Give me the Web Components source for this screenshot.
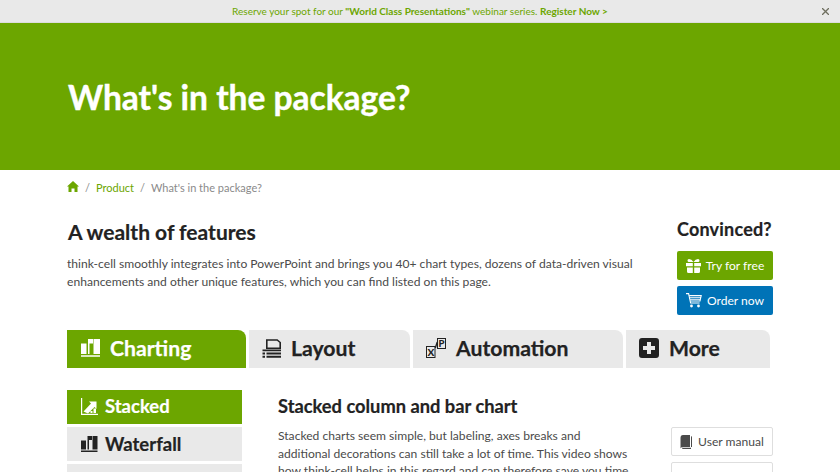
<!DOCTYPE html>
<html lang="en">
<head>
<meta charset="utf-8">
<title>What's in the package?</title>
<style>
  html, body { margin: 0; height: 472px; overflow: hidden; background: #fff; }
  body { font-family: Lato, "Open Sans", sans-serif; color: #222; }
</style>
</head>
<body>
<promo-banner></promo-banner>
<page-hero>What's in the package?</page-hero>
<page-body></page-body>

<script>
const ICONS = {
  charting: '<svg width="19" height="18" viewBox="0 0 19 18"><path fill="currentColor" d="M0 4.500h5.500V15H0zM7 0h5v4.500H8.500V15H7zM12.500 0H19v15h-6.500zM0 16.200h19v1.500H0z" /></svg>',
  layout: '<svg width="19" height="19" viewBox="0 0 19 19"><path fill="none" stroke="currentColor" stroke-width="1.600" d="M4.800 9.200V1h10.400l3 2.500v5.700H4.800z" /><path fill="currentColor" d="M.5 10.500h18.500v1.800H.5zM.5 13.500h2.500v2H.5zM4.500 13.500H19v2H4.500zM.5 16.700h2.500v2H.5zM4.500 16.700H19v2H4.500z" /></svg>',
  automation: '<svg width="20" height="20" viewBox="0 0 20 20"><rect x=".5" y="8.500" width="8.500" height="11" fill="none" stroke="currentColor" /><rect x="11.500" y=".5" width="8" height="10" fill="none" stroke="currentColor" /><path stroke="currentColor" stroke-width="1.400" d="M9.300 10l2-6" /><text x="4.800" y="17.500" text-anchor="middle" font-size="10" font-weight="900" fill="currentColor">X</text><text x="15.500" y="9" text-anchor="middle" font-size="9.500" font-weight="900" fill="currentColor">P</text></svg>',
  more: '<svg width="20" height="20" viewBox="0 0 20 20"><path fill="currentColor" fill-rule="evenodd" d="M3 0h14q3 0 3 3v14q0 3-3 3H3q-3 0-3-3V3q0-3 3-3zM8 4v4H4v4h4v4h4v-4h4V8h-4V4z" /></svg>',
  stacked: '<svg width="17" height="17" viewBox="0 0 17 17"><path fill="none" stroke="currentColor" stroke-width="1.200" d="M.6 0v16.400H17" /><path fill="currentColor" d="M2.500 13.500l7.500-8-2-2h7.500v7.500l-2-2-6.500 6.500zM9.500 15v-2h2v2zM12.500 15v-4.500h2.500V15z" /></svg>',
  waterfall: '<svg width="17" height="16" viewBox="0 0 17 16"><path fill="currentColor" d="M0 4.500h5v9H0zM6.500 0H11v4H8v9.500H6.500zM11.500 0H16.500v13.500h-5zM0 14.500h16.500V16H0z" /></svg>',
  home: '<svg width="12" height="11" viewBox="0 0 12 11"><path fill="#6ca600" d="M6 0l6 5.500h-1.500V11H7.500V7.500h-3V11H1.500V5.500H0z" /></svg>',
  gift: '<svg width="15" height="14" viewBox="0 0 15 14"><path fill="currentColor" d="M1 8.500h5.800V14H2.500Q1 14 1 12.500zM8.200 8.500H14v4q0 1.500-1.500 1.500H8.200zM0 4h6.800v3.300H0zM8.200 4H15v3.300H8.200zM3 0q2.500 0 4.500 3Q9.500 0 12 0q1.500 0 1.500 1.500T12 3H3Q1.500 3 1.500 1.500T3 0z" /></svg>',
  cart: '<svg width="16" height="15" viewBox="0 0 16 15"><path fill="none" stroke="currentColor" stroke-width="1.100" d="M0 .6h2.600l2 9.400h9" /><path fill="none" stroke="currentColor" stroke-width="1.100" d="M3.200 2.500h12l-1.200 5.500H4.300M3.800 4.300h11M4.100 6.200h10.300" /><circle cx="5.500" cy="13" r="1.400" fill="currentColor" /><circle cx="12.500" cy="13" r="1.400" fill="currentColor" /></svg>',
  book: '<svg width="13" height="14" viewBox="0 0 13 14"><path fill="currentColor" d="M3 0h7v12H3Q.5 12 .5 13.500V3Q.5 0 3 0zM11 1q1 .2 1 1.500V12h-1zM2 12.800h9V14H3q-1 0-1-1.200z" /></svg>'
};

class PromoBanner extends HTMLElement {
  constructor() {
    super();
    this.attachShadow({ mode: 'open' }).innerHTML = `
      <style>
        :host {
          display: flex;
          justify-content: center;
          align-items: center;
          position: relative;
          height: 21px;
          padding-bottom: 1px;
          background: #e9e9e9;
          border-bottom: 1px solid #dcdcdc;
          color: #6ca600;
          font-size: 10px;
        }
        a { color: inherit; text-decoration: none; }
        svg { position: absolute; right: 11px; top: 8px; }
      </style>
      <span>Reserve your spot for our <b>"World Class Presentations"</b> webinar series. <a href="#"><b>Register Now &gt;</b></a></span>
      <svg width="7" height="7" viewBox="0 0 7 7"><path stroke="#6f6f5f" stroke-width="1.300" d="M0 0l7 7M7 0L0 7" /></svg>`;
  }
}

class PageHero extends HTMLElement {
  constructor() {
    super();
    this.attachShadow({ mode: 'open' }).innerHTML = `
      <style>
        :host {
          display: flex;
          align-items: center;
          box-sizing: border-box;
          height: 147px;
          padding: 0 68px;
          background: #6ca600;
          color: #fff;
          font-size: 33.500px;
          font-weight: 700;
          -webkit-text-stroke: .4px #fff;
        }
      </style>
      <slot></slot>`;
  }
}

class BreadCrumb extends HTMLElement {
  constructor() {
    super();
    this.attachShadow({ mode: 'open' }).innerHTML = `
      <style>
        :host {
          display: flex;
          align-items: center;
          gap: 6px;
          height: 34px;
          padding-bottom: 1px;
          font-size: 11px;
          color: #8a8a8a;
        }
        a { color: #6ca600; text-decoration: none; }
        svg { display: block; margin-top: -1px; }
      </style>
      <a href="#">${ICONS.home}</a><span>/</span><a href="#">Product</a><span>/</span><span>What's in the package?</span>`;
  }
}

class ActionButton extends HTMLElement {
  constructor() {
    super();
    const icon = ICONS[this.getAttribute('icon')] || '';
    this.attachShadow({ mode: 'open' }).innerHTML = `
      <style>
        :host {
          display: flex;
          align-items: center;
          justify-content: center;
          gap: 5px;
          box-sizing: border-box;
          height: 29px;
          border-radius: 2px;
          background: #6ca600;
          color: #fff;
          font-size: 12.100px;
        }
        :host([kind="blue"]) { background: #0073b7; }
        :host([kind="plain"]) {
          background: #fff;
          color: #4a4a4a;
          border: 1px solid #dedede;
        }
        svg { display: block; }
      </style>
      ${icon}<slot></slot>`;
  }
}

class IntroBlock extends HTMLElement {
  constructor() {
    super();
    this.attachShadow({ mode: 'open' }).innerHTML = `
      <style>
        :host {
          display: flex;
          justify-content: space-between;
          height: 125px;
        }
        h2 {
          margin: 14px 0 0;
          padding-left: 1px;
          font-size: 21px;
          line-height: 26px;
          font-weight: 700;
          -webkit-text-stroke: .2px #222;
          color: #222;
        }
        p {
          margin: 10px 0 0;
          width: 590px;
          font-size: 12.100px;
          line-height: 18px;
          color: #4a4a4a;
        }
        aside {
          display: flex;
          flex-direction: column;
          width: 96px;
          gap: 6px;
        }
        h3 {
          margin: 12px 0 4px;
          font-size: 18px;
          line-height: 24px;
          font-weight: 700;
          letter-spacing: .2px;
          -webkit-text-stroke: .2px #222;
          white-space: nowrap;
          color: #222;
        }
      </style>
      <div>
        <h2>A wealth of features</h2>
        <p>think-cell smoothly integrates into PowerPoint and brings you 40+ chart types, dozens of data-driven visual enhancements and other unique features, which you can find listed on this page.</p>
      </div>
      <aside>
        <h3>Convinced?</h3>
        <action-button icon="gift">Try for free</action-button>
        <action-button icon="cart" kind="blue">Order now</action-button>
      </aside>`;
  }
}

class TabItem extends HTMLElement {
  constructor() {
    super();
    const icon = ICONS[this.getAttribute('icon')] || '';
    this.attachShadow({ mode: 'open' }).innerHTML = `
      <style>
        :host {
          display: flex;
          align-items: center;
          gap: 10px;
          box-sizing: border-box;
          height: 38px;
          padding: 0 0 2px 13px;
          border-radius: 0 8px 0 0;
          background: #e9e9e9;
          color: #222;
          font-size: 21.200px;
          font-weight: 700;
          -webkit-text-stroke: .25px currentColor;
        }
        :host([active]) { background: #6ca600; color: #fff; padding-left: 14px; }
        svg { display: block; -webkit-text-stroke: 0; }
      </style>
      ${icon}<slot></slot>`;
  }
}

class TabBar extends HTMLElement {
  constructor() {
    super();
    this.attachShadow({ mode: 'open' }).innerHTML = `
      <style>
        :host {
          display: grid;
          grid-template-columns: 179px 161px 210px 144px;
          gap: 3px;
          height: 38px;
        }
      </style>
      <slot></slot>`;
  }
}

class SideItem extends HTMLElement {
  constructor() {
    super();
    const icon = ICONS[this.getAttribute('icon')] || '';
    this.attachShadow({ mode: 'open' }).innerHTML = `
      <style>
        :host {
          display: flex;
          align-items: center;
          gap: 7px;
          box-sizing: border-box;
          height: 34px;
          padding: 0 0 1px 14px;
          background: #e9e9e9;
          color: #222;
          font-size: 18.500px;
          font-weight: 700;
          -webkit-text-stroke: .2px currentColor;
        }
        :host([active]) { background: #6ca600; color: #fff; padding-bottom: 2px; }
        svg { display: block; }
      </style>
      ${icon}<slot></slot>`;
  }
}

class SideNav extends HTMLElement {
  constructor() {
    super();
    this.attachShadow({ mode: 'open' }).innerHTML = `
      <style>
        :host {
          display: flex;
          flex-direction: column;
          gap: 3px;
          width: 175px;
          flex: none;
        }
      </style>
      <slot></slot>`;
  }
}

class FeatureDetail extends HTMLElement {
  constructor() {
    super();
    this.attachShadow({ mode: 'open' }).innerHTML = `
      <style>
        :host { display: block; flex: 1; min-width: 0; }
        h3 {
          margin: 4px 0 0;
          font-size: 18.300px;
          line-height: 24px;
          font-weight: 700;
          -webkit-text-stroke: .2px #222;
          color: #222;
        }
        .row { display: flex; justify-content: space-between; margin-top: 9px; }
        p {
          margin: 0;
          width: 358px;
          font-size: 12.100px;
          line-height: 17.500px;
          color: #4a4a4a;
        }
        aside {
          display: flex;
          flex-direction: column;
          gap: 6px;
          width: 102px;
        }
      </style>
      <h3>Stacked column and bar chart</h3>
      <div class="row">
        <p>Stacked charts seem simple, but labeling, axes breaks and<br>additional decorations can still take a lot of time. This video shows<br>how think-cell helps in this regard and can therefore save you time.</p>
        <aside>
          <action-button icon="book" kind="plain">User manual</action-button>
          <action-button kind="plain">&nbsp;</action-button>
        </aside>
      </div>`;
  }
}

class PageBody extends HTMLElement {
  constructor() {
    super();
    this.attachShadow({ mode: 'open' }).innerHTML = `
      <style>
        :host { display: block; padding: 0 67px; }
        .panel { display: flex; gap: 36px; margin-top: 22px; }
      </style>
      <bread-crumb></bread-crumb>
      <intro-block></intro-block>
      <tab-bar>
        <tab-item icon="charting" active>Charting</tab-item>
        <tab-item icon="layout">Layout</tab-item>
        <tab-item icon="automation">Automation</tab-item>
        <tab-item icon="more">More</tab-item>
      </tab-bar>
      <div class="panel">
        <side-nav>
          <side-item icon="stacked" active>Stacked</side-item>
          <side-item icon="waterfall">Waterfall</side-item>
          <side-item>&nbsp;</side-item>
        </side-nav>
        <feature-detail></feature-detail>
      </div>`;
  }
}

customElements.define('promo-banner', PromoBanner);
customElements.define('page-hero', PageHero);
customElements.define('bread-crumb', BreadCrumb);
customElements.define('action-button', ActionButton);
customElements.define('intro-block', IntroBlock);
customElements.define('tab-item', TabItem);
customElements.define('tab-bar', TabBar);
customElements.define('side-item', SideItem);
customElements.define('side-nav', SideNav);
customElements.define('feature-detail', FeatureDetail);
customElements.define('page-body', PageBody);
</script>
</body>
</html>
